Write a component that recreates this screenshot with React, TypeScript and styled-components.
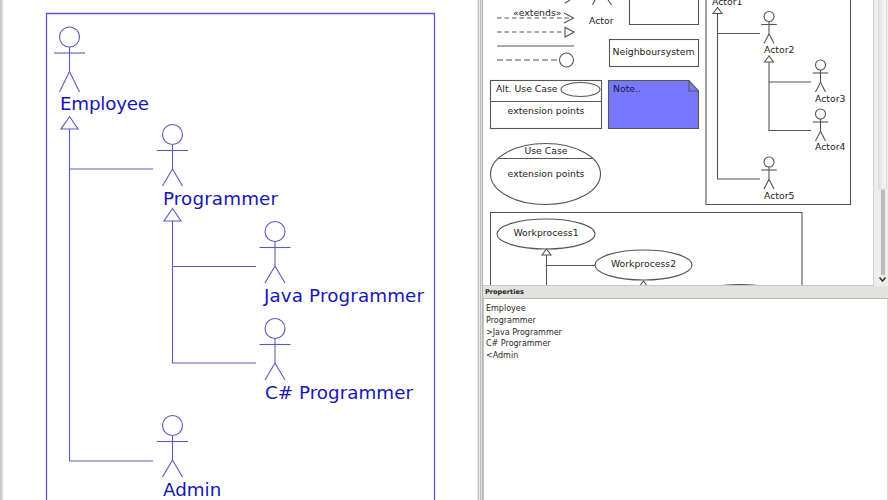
import styled, { createGlobalStyle } from 'styled-components';

const INK_BLUE = '#5a5ac2';
const TEXT_BLUE = '#1616b4';
const INK_GREY = '#555';

const GlobalStyle = createGlobalStyle`
  html, body, #root {
    margin: 0;
    width: 888px;
    height: 500px;
    overflow: hidden;
    background: #fff;
  }
`;

const Page = styled.div`
  display: flex;
  width: 888px;
  height: 500px;
  font-family: 'DejaVu Sans', sans-serif;
  background: #fff;
`;

const EdgeStrip = styled.div`
  flex: 0 0 3px;
  background: linear-gradient(to right, #c4c4c4, #dcdcdc);
`;

const DiagramPane = styled.div`
  flex: 0 0 474px;
  background: #fff;
  overflow: hidden;

  svg {
    display: block;
  }
`;

const Splitter = styled.div`
  flex: 0 0 6px;
  background: linear-gradient(to right, #e4e4e4 0 1px, #c6c6c6 1px 2px, #e6e6e6 2px 3px, #bdbdbd 3px 4px, #e0e0e0 4px 5px, #b4b4b4 5px 6px);
`;

const SideColumn = styled.div`
  flex: 1;
  min-width: 0;
  display: flex;
  flex-direction: column;
`;

const PaletteRow = styled.div`
  flex: 0 0 286px;
  display: flex;
  background: #ededeb;
`;

const PalettePane = styled.div`
  flex: 0 0 391px;
  background: #fff;
  border-right: 1px solid #d0d0d0;
  border-bottom: 1px solid #c8c8c8;
  box-sizing: border-box;
  overflow: hidden;

  svg {
    display: block;
  }
`;

const ScrollBar = styled.div`
  flex: 1;
  display: flex;
  flex-direction: column;
  align-items: center;
  padding-left: 3px;
`;

const ScrollThumb = styled.div`
  flex: 0 0 190px;
  width: 9px;
  box-sizing: border-box;
  background: linear-gradient(to right, #e2e2e2, #f8f8f8);
  border: 1px solid #dadada;
  border-top: none;
  border-radius: 0 0 4px 4px;
`;

const ScrollTrack = styled.div`
  flex: 0 0 85px;
  width: 4px;
  background: #bcbcbc;
`;

const ScrollArrow = styled.svg`
  margin-top: 2px;
  width: 7px;
  height: 5px;
`;

const PropertiesTitle = styled.div`
  flex: 0 0 12px;
  display: flex;
  align-items: center;
  padding-left: 2px;
  font-size: 6.6px;
  font-weight: 700;
  color: #222;
  background: #e2e2de;
  border-bottom: 1px solid #b8b8b4;
`;

const PropertiesBody = styled.div`
  flex: 1;
  padding: 4px 2px;
  background: #fff;
  border-left: 1px solid #c4c4c4;
  border-right: 1px solid #d8d8d8;
`;

const PropertyLine = styled.div`
  height: 11.8px;
  line-height: 11.8px;
  font-size: 8px;
  color: #2a2a2a;
  white-space: pre;
`;

const BlueLabel = styled.text`
  font-family: 'DejaVu Sans', sans-serif;
  font-size: 18.3px;
  fill: ${TEXT_BLUE};
`;

const SmallLabel = styled.text<{ $note?: boolean }>`
  font-family: 'DejaVu Sans', sans-serif;
  font-size: 9.3px;
  fill: ${({ $note }) => ($note ? '#14143c' : '#222')};
`;

const Strokes = styled.g<{ $ink: string }>`
  fill: none;
  stroke: ${({ $ink }) => $ink};
  stroke-width: 1.1;
`;

// stick figure, sized from the head radius; drop = head centre to feet
function Figure({ cx, headY, s = 1, drop = 51.5 }: { cx: number; headY: number; s?: number; drop?: number }) {
  const arm = 15.5 * s;
  const leg = 10 * s;
  const hip = headY + 34.5 * s;
  const foot = headY + drop;
  return (
    <>
      <circle cx={cx} cy={headY} r={10 * s} />
      <line x1={cx} y1={headY + 10 * s} x2={cx} y2={hip} />
      <line x1={cx - arm} y1={headY + 16 * s} x2={cx + arm} y2={headY + 16 * s} />
      <line x1={cx} y1={hip} x2={cx - leg} y2={foot} />
      <line x1={cx} y1={hip} x2={cx + leg} y2={foot} />
    </>
  );
}

function Triangle({ x, top, w, h }: { x: number; top: number; w: number; h: number }) {
  return <polygon points={`${x},${top} ${x - w},${top + h} ${x + w},${top + h}`} />;
}

function EmployeeDiagram() {
  return (
    <svg width={474} height={500} viewBox="3 0 474 500" aria-label="Employee hierarchy">
      <Strokes $ink={INK_BLUE}>
        <path d="M46.5 500V13.5H434.5V500" strokeWidth={1.3} />
        <Figure cx={69.5} headY={37} drop={55} />
        <Figure cx={172.5} headY={134.5} />
        <Figure cx={275} headY={231.5} />
        <Figure cx={275} headY={328.5} />
        <Figure cx={172.5} headY={425.5} />
        <Triangle x={69.5} top={116.5} w={8.5} h={12.5} />
        <Triangle x={172.5} top={208.5} w={8.5} h={12.5} />
        <path d="M69.5 129V461H153M69.5 169H153" />
        <path d="M172.5 221V363H256M172.5 266.5H256" />
      </Strokes>
      <BlueLabel x={60} y={110} textLength={89}>Employee</BlueLabel>
      <BlueLabel x={163} y={205} textLength={115}>Programmer</BlueLabel>
      <BlueLabel x={264} y={302} textLength={160}>Java Programmer</BlueLabel>
      <BlueLabel x={265} y={399} textLength={148}>C# Programmer</BlueLabel>
      <BlueLabel x={163} y={496}>Admin</BlueLabel>
    </svg>
  );
}

function PaletteDiagram() {
  return (
    <svg width={391} height={285} viewBox="483 0 391 285" aria-label="UML palette">
      <Strokes $ink={INK_GREY}>
        {/* arrows column */}
        <path d="M565 3L570 0" />
        <path d="M497 18H573" strokeDasharray="4.5 3" />
        <path d="M564 13L573.5 18L564 23" />
        <path d="M497 32H565" strokeDasharray="4.5 3" />
        <polygon points="574,32 565,27.5 565,37" />
        <path d="M497 46H574" />
        <path d="M497 60H559" strokeDasharray="6 3" />
        <circle cx={566.5} cy={60} r={7} />

        {/* clipped actor and class */}
        <path d="M595 0L592.5 5M608 0L611.5 5" />
        <path d="M629.5 0V24.5H698.5V0" />
        <rect x={609.5} y={39.5} width={89} height={27} />

        {/* alt use case */}
        <rect x={490.5} y={80.5} width={111} height={48} />
        <line x1={490.5} y1={101.5} x2={601.5} y2={101.5} />
        <ellipse cx={580.5} cy={89.5} rx={19.5} ry={7} />

        {/* note */}
        <path d="M608.5 80.5H689L698.5 91V128.5H608.5Z" fill="#7878ff" />
        <path d="M689 80.5V91H698.5" />

        {/* use case */}
        <ellipse cx={545.5} cy={174} rx={55} ry={30.5} />
        <line x1={498} y1={158.5} x2={593} y2={158.5} />

        {/* actor tree */}
        <path d="M706 0V204.5H850.5V0" />
        <Triangle x={717.5} top={7.5} w={4.5} h={6} />
        <Triangle x={769} top={56} w={4.5} h={6} />
        <path d="M717.5 13.5V179H760M717.5 33.5H760" />
        <path d="M769 62V130.5H811M769 82H811" />
        <Figure cx={769} headY={16.5} s={0.5} drop={27} />
        <Figure cx={820.5} headY={65} s={0.5} drop={27} />
        <Figure cx={820.5} headY={114} s={0.5} drop={27} />
        <Figure cx={769} headY={162} s={0.5} drop={27} />

        {/* workprocess tree */}
        <path d="M490.5 285V212.5H802V285" />
        <ellipse cx={546} cy={234} rx={49} ry={15} />
        <ellipse cx={643.5} cy={265} rx={48.5} ry={15} />
        <ellipse cx={740} cy={299.5} rx={49} ry={15} />
        <Triangle x={546.5} top={249} w={4.5} h={6} />
        <Triangle x={643.5} top={281} w={4.5} h={6} />
        <path d="M546.5 255V285M546.5 265.5H595" />
      </Strokes>

      <SmallLabel x={513} y={16}>«extends»</SmallLabel>
      <SmallLabel x={589} y={24}>Actor</SmallLabel>
      <SmallLabel x={653.5} y={55} textAnchor="middle">Neighboursystem</SmallLabel>
      <SmallLabel x={496} y={92}>Alt. Use Case</SmallLabel>
      <SmallLabel x={546} y={114} textAnchor="middle">extension points</SmallLabel>
      <SmallLabel x={613} y={92} $note>Note..</SmallLabel>
      <SmallLabel x={546} y={154} textAnchor="middle">Use Case</SmallLabel>
      <SmallLabel x={546} y={177} textAnchor="middle">extension points</SmallLabel>
      <SmallLabel x={546} y={236} textAnchor="middle">Workprocess1</SmallLabel>
      <SmallLabel x={643.5} y={267} textAnchor="middle">Workprocess2</SmallLabel>
      <SmallLabel x={712} y={5}>Actor1</SmallLabel>
      <SmallLabel x={764} y={53}>Actor2</SmallLabel>
      <SmallLabel x={815} y={102}>Actor3</SmallLabel>
      <SmallLabel x={815} y={150}>Actor4</SmallLabel>
      <SmallLabel x={764} y={199}>Actor5</SmallLabel>
    </svg>
  );
}

const PROPERTY_LINES = ['Employee', 'Programmer', '>Java Programmer', 'C# Programmer', '<Admin'];

export default function App() {
  return (
    <>
      <GlobalStyle />
      <Page>
        <EdgeStrip />
        <DiagramPane>
          <EmployeeDiagram />
        </DiagramPane>
        <Splitter />
        <SideColumn>
          <PaletteRow>
            <PalettePane>
              <PaletteDiagram />
            </PalettePane>
            <ScrollBar>
              <ScrollThumb />
              <ScrollTrack />
              <ScrollArrow viewBox="0 0 7 5" aria-hidden>
                <path d="M0.5 0.5L3.5 4L6.5 0.5" fill="none" stroke="#222" strokeWidth={1.4} />
              </ScrollArrow>
            </ScrollBar>
          </PaletteRow>
          <PropertiesTitle>Properties</PropertiesTitle>
          <PropertiesBody>
            {PROPERTY_LINES.map((line) => (
              <PropertyLine key={line}>{line}</PropertyLine>
            ))}
          </PropertiesBody>
        </SideColumn>
      </Page>
    </>
  );
}
